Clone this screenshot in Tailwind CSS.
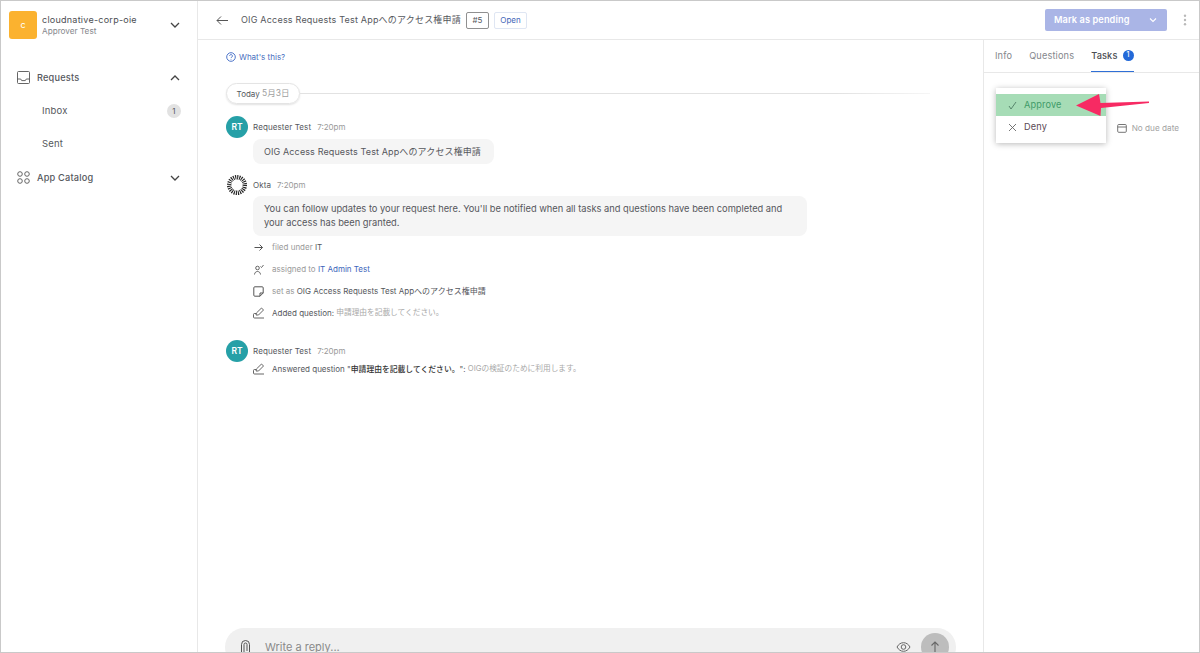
<!DOCTYPE html>
<html lang="ja">
<head>
    <meta charset="UTF-8">
    <title>Access Requests</title>
    <script src="https://cdn.jsdelivr.net/npm/@tailwindcss/browser@4"></script>
</head>
<body class="bg-white">
    <div class="relative flex h-[653px] w-[1200px] overflow-hidden border border-[#c9c9c9] bg-white font-['Inter','Noto_Sans_CJK_JP',sans-serif] text-[#55575c] antialiased">

        <!-- Sidebar -->
        <aside class="flex w-[197px] shrink-0 flex-col border-r border-[#e8e8e8] pl-[8px] pr-[16px]">
            <div class="mt-[10px] flex items-center">
                <div class="flex h-[28px] w-[28px] items-center justify-center rounded-[3px] bg-[#fbb22f] text-[9px] text-white">c</div>
                <div class="ml-[5px] flex-1 leading-none">
                    <div class="text-[9px] tracking-[0.25px] text-[#4b4d52]">cloudnative-corp-oie</div>
                    <div class="mt-[3px] text-[8.2px] text-[#85878c]">Approver Test</div>
                </div>
                <svg class="mr-[1px] h-[10px] w-[10px]" viewBox="0 0 10 10" fill="none" stroke="#444" stroke-width="1.3"><path d="M1 3l4 4 4-4"/></svg>
            </div>

            <div class="mt-[22px] flex h-[33px] items-center pl-[8px]">
                <svg class="h-[13px] w-[13px]" viewBox="0 0 13 13" fill="none" stroke="#555" stroke-width="0.9"><rect x="0.5" y="0.5" width="12" height="12" rx="1"/><path d="M0.5 8h3.2l1 1.6h3.6l1-1.6h3.2"/></svg>
                <span class="ml-[7px] flex-1 text-[9.2px] font-medium tracking-[0.2px]">Requests</span>
                <svg class="mr-[1px] h-[10px] w-[10px]" viewBox="0 0 10 10" fill="none" stroke="#444" stroke-width="1.3"><path d="M1 7l4-4 4 4"/></svg>
            </div>
            <div class="flex h-[34px] items-center pl-[33px]">
                <span class="flex-1 text-[9.5px] tracking-[0.2px]">Inbox</span>
                <span class="flex h-[14px] w-[14px] items-center justify-center rounded-full bg-[#e2e2e2] text-[8px]">1</span>
            </div>
            <div class="flex h-[33px] items-center pl-[33px] text-[9.5px] tracking-[0.2px]">Sent</div>
            <div class="flex h-[33px] items-center pl-[8px]">
                <svg class="h-[13px] w-[13px]" viewBox="0 0 13 13" fill="none" stroke="#555" stroke-width="0.9"><circle cx="3" cy="3" r="2.3"/><circle cx="10" cy="3" r="2.3"/><circle cx="3" cy="10" r="2.3"/><circle cx="10" cy="10" r="2.3"/></svg>
                <span class="ml-[7px] flex-1 text-[9.2px] font-medium tracking-[0.2px]">App Catalog</span>
                <svg class="mr-[1px] h-[10px] w-[10px]" viewBox="0 0 10 10" fill="none" stroke="#444" stroke-width="1.3"><path d="M1 3l4 4 4-4"/></svg>
            </div>
        </aside>

        <div class="flex min-w-0 flex-1 flex-col">
            <!-- Header -->
            <header class="flex h-[39px] shrink-0 items-center border-b border-[#e8e8e8] pl-[18px] pr-[10px]">
                <svg class="h-[11px] w-[13px]" viewBox="0 0 13 11" fill="none" stroke="#555" stroke-width="1"><path d="M12 5.5H1M5 1.5l-4 4 4 4"/></svg>
                <span class="ml-[12px] text-[9px] tracking-[0.2px]">OIG Access Requests Test Appへのアクセス権申請</span>
                <span class="ml-[5px] flex h-[17px] w-[23px] items-center justify-center rounded-[2px] border border-[#909090] text-[8px]">#5</span>
                <span class="ml-[5px] flex h-[17px] w-[33px] items-center justify-center rounded-[2px] border border-[#dfe6f3] text-[8px] text-[#3f66b8]">Open</span>
                <div class="ml-auto flex h-[22px] w-[122px] items-center rounded-[2px] bg-[#aab5e6] pl-[9px] pr-[10px] text-white">
                    <span class="flex-1 text-[9.2px] font-semibold tracking-[0.1px]">Mark as pending</span>
                    <svg class="h-[8px] w-[8px]" viewBox="0 0 8 8" fill="none" stroke="#fff" stroke-width="1.1"><path d="M1 2.5l3 3 3-3"/></svg>
                </div>
                <svg class="ml-[16px] mr-[2px] h-[12px] w-[4px]" viewBox="0 0 4 12" fill="#b9b9b9"><circle cx="2" cy="1.7" r="1.2"/><circle cx="2" cy="6" r="1.2"/><circle cx="2" cy="10.3" r="1.2"/></svg>
            </header>

            <div class="flex min-h-0 flex-1">
                <!-- Conversation -->
                <main class="relative min-w-0 flex-1 pl-[28px] pr-[26px]">
                    <div class="mt-[11px] flex items-center text-[8px] text-[#4a6fc0]">
                        <svg class="mr-[3px] h-[10px] w-[10px]" viewBox="0 0 10 10" fill="none" stroke="#3b66c4" stroke-width="0.9"><circle cx="5" cy="5" r="4.3"/><path d="M3.6 3.9a1.4 1.4 0 1 1 2.2 1.2c-.5.3-.8.5-.8 1"/><path d="M5 7.1v.6"/></svg>
                        What's this?
                    </div>

                    <div class="mt-[20px] flex items-center">
                        <span class="flex h-[21px] w-[74px] items-center justify-center rounded-full border border-[#e4e4e4] text-[8px] shadow-[0_1px_2px_rgba(0,0,0,0.12)]">Today&nbsp;<span class="text-[8.5px] text-[#a0a0a0]">5月3日</span></span>
                        <span class="h-px w-[630px] bg-[linear-gradient(to_right,#e2e2e2,#e2e2e2_85%,#f6f6f6)]"></span>
                    </div>

                    <div class="mt-[12px] flex items-center">
                        <span class="flex h-[22px] w-[22px] items-center justify-center rounded-full bg-[#26a0a7] text-[8.5px] font-semibold text-white">RT</span>
                        <span class="ml-[5px] text-[8px] tracking-[0.1px]">Requester Test</span>
                        <span class="ml-[6px] text-[8px] text-[#9a9a9a]">7:20pm</span>
                    </div>
                    <div class="ml-[27px] mt-[1px] flex h-[25px] w-[241px] items-center rounded-[8px] bg-[#f5f5f5] pl-[11px] text-[9px] tracking-[0.12px]">OIG Access Requests Test Appへのアクセス権申請</div>

                    <div class="mt-[10px] flex items-center">
                        <svg class="h-[22px] w-[22px]" viewBox="0 0 22 22" fill="none" stroke="#222"><circle cx="11" cy="11" r="7.8" stroke-width="4.4" stroke-dasharray="1.1 0.94"/></svg>
                        <span class="ml-[5px] text-[8px] tracking-[0.1px]">Okta</span>
                        <span class="ml-[6px] text-[8px] text-[#9a9a9a]">7:20pm</span>
                    </div>
                    <div class="ml-[27px] w-[554px] rounded-[8px] bg-[#f5f5f5] py-[6px] pl-[11px] pr-[8px] text-[9.3px] leading-[14px]">You can follow updates to your request here. You'll be notified when all tasks and questions have been completed and your access has been granted.</div>

                    <div class="ml-[27px] text-[8px] text-[#9a9a9a]">
                        <div class="flex h-[22px] items-center">
                            <svg class="mr-[8px] h-[11px] w-[11px]" viewBox="0 0 11 11" fill="none" stroke="#555" stroke-width="1"><path d="M1.5 5.5h8M6.5 2.5l3 3-3 3"/></svg>
                            filed under&nbsp;<span class="text-[#55575c]">IT</span>
                        </div>
                        <div class="flex h-[22px] items-center">
                            <svg class="mr-[8px] h-[11px] w-[11px]" viewBox="0 0 11 11" fill="none" stroke="#555" stroke-width="0.9"><circle cx="4.5" cy="4" r="1.8"/><path d="M1.5 10.500c.2-2 1.400-3 3-3s2.800 1 3 3M7.500 2.500l1 1 2-2.500"/></svg>
                            assigned to&nbsp;<span class="text-[#3d66bb]">IT Admin Test</span>
                        </div>
                        <div class="flex h-[22px] items-center">
                            <svg class="mr-[8px] h-[11px] w-[11px]" viewBox="0 0 11 11" fill="none" stroke="#555" stroke-width="1"><path d="M7 10.200H1.800a1 1 0 0 1-1-1V1.800a1 1 0 0 1 1-1h7.400a1 1 0 0 1 1 1V7zM7 10.200V7h3.200"/></svg>
                            set as&nbsp;<span class="text-[#55575c]">OIG Access Requests Test Appへのアクセス権申請</span>
                        </div>
                        <div class="flex h-[22px] items-center">
                            <svg class="mr-[7px] h-[12px] w-[12px]" viewBox="0 0 12 12" fill="none" stroke="#555" stroke-width="0.9"><path d="M3 8l.4-2L8.500 1l2 2-5 5zM3 6.500H1.500a1 1 0 0 0-1 1V10a1 1 0 0 0 1 1h9.500"/></svg>
                            <span class="text-[#55575c]">Added question:</span>&nbsp;<span class="text-[7.7px] text-[#a8a8a8]">申請理由を記載してください。</span>
                        </div>
                    </div>

                    <div class="mt-[16px] flex items-center">
                        <span class="flex h-[22px] w-[22px] items-center justify-center rounded-full bg-[#26a0a7] text-[8.5px] font-semibold text-white">RT</span>
                        <span class="ml-[5px] text-[8px] tracking-[0.1px]">Requester Test</span>
                        <span class="ml-[6px] text-[8px] text-[#9a9a9a]">7:20pm</span>
                    </div>
                    <div class="ml-[27px] flex h-[14px] items-center text-[8px] text-[#a8a8a8]">
                        <svg class="mr-[7px] h-[12px] w-[12px]" viewBox="0 0 12 12" fill="none" stroke="#555" stroke-width="0.9"><path d="M3 8l.4-2L8.500 1l2 2-5 5zM3 6.500H1.500a1 1 0 0 0-1 1V10a1 1 0 0 0 1 1h9.500"/></svg>
                        <span class="text-[#55575c]">Answered question "<span class="text-[7.8px] font-medium text-[#333]">申請理由を記載してください。</span>":</span>&nbsp;<span class="text-[7.7px]">OIGの検証のために利用します。</span>
                    </div>

                    <!-- Reply box, cut off by the window edge -->
                    <div class="absolute bottom-[-14px] left-[27px] flex h-[38px] w-[731px] items-center rounded-[19px] bg-[#f0f0f0] pl-[15px] pr-[7px]">
                        <svg class="h-[15px] w-[12px]" viewBox="0 0 12 15" fill="none" stroke="#555" stroke-width="1"><path d="M1.500 14V4.500a4 4 0 0 1 8 0V14M4 13V4.500a1.500 1.500 0 0 1 3 0V11"/></svg>
                        <span class="ml-[13px] flex-1 text-[11px] text-[#8a8a8a]">Write a reply...</span>
                        <svg class="h-[12px] w-[15px]" viewBox="0 0 15 12" fill="none" stroke="#666" stroke-width="1"><path d="M1 6c1.600-2.800 3.800-4.300 6.500-4.300S12.400 3.200 14 6c-1.600 2.800-3.800 4.300-6.500 4.300S2.600 8.800 1 6z"/><circle cx="7.500" cy="6" r="2.300"/></svg>
                        <span class="ml-[10px] flex h-[28px] w-[28px] items-center justify-center rounded-full bg-[#bdbdbd]">
                            <svg class="h-[12px] w-[10px]" viewBox="0 0 10 12" fill="none" stroke="#666" stroke-width="1.100"><path d="M5 11.500V1M1.500 4.500L5 1l3.500 3.500"/></svg>
                        </span>
                    </div>
                </main>

                <!-- Right panel -->
                <section class="w-[216px] shrink-0 border-l border-[#e8e8e8]">
                    <nav class="flex h-[33px] items-stretch border-b border-[#e8e8e8] pl-[11px] text-[9.2px] tracking-[0.15px]">
                        <span class="flex items-center text-[#85878c]">Info</span>
                        <span class="ml-[17px] flex items-center text-[#85878c]">Questions</span>
                        <span class="relative ml-[17px] flex items-center border-b border-[#2f6fd6] font-medium text-[#4b4d52]">Tasks
                            <span class="ml-[5px] flex h-[11px] w-[11px] items-center justify-center rounded-full bg-[#2369d8] text-[7px] text-white">1</span>
                        </span>
                    </nav>
                    <div class="mt-[49px] flex items-center justify-end pr-[20px] text-[8.2px] text-[#a3a3a3]">
                        <svg class="mr-[5px] h-[10px] w-[10px]" viewBox="0 0 10 10" fill="none" stroke="#666" stroke-width="0.9"><rect x="0.700" y="1.500" width="8.600" height="7.800" rx="1"/><path d="M0.700 4h8.600"/></svg>
                        No due date
                    </div>
                </section>
            </div>
        </div>

        <!-- Task dropdown -->
        <div class="absolute left-[995px] top-[87px] w-[110px] bg-white pt-[6px] shadow-[0_1px_6px_rgba(0,0,0,0.28)]">
            <div class="flex h-[22px] items-center bg-[#a6dcb6] pl-[12px] text-[9.2px] tracking-[0.15px] text-[#3f9b68]">
                <svg class="mr-[7px] h-[9px] w-[9px]" viewBox="0 0 9 9" fill="none" stroke="#4f7d64" stroke-width="0.9"><path d="M1 5l2 3 5-7"/></svg>
                Approve
            </div>
            <div class="flex h-[22px] items-center pl-[12px] text-[9.2px] tracking-[0.15px] text-[#5c4a55]">
                <svg class="mr-[7px] h-[9px] w-[9px]" viewBox="0 0 9 9" fill="none" stroke="#666" stroke-width="0.9"><path d="M1 1l7 7M8 1L1 8"/></svg>
                Deny
            </div>
            <div class="h-[5px]"></div>
        </div>

        <!-- Annotation arrow -->
        <svg class="absolute left-[1071px] top-[90px] h-[30px] w-[80px]" viewBox="0 0 80 30" fill="#f72a63"><path d="M4 14.500L27 3l1.500 9L77 10.500v1.500L29 17l-.500 8z"/></svg>
    </div>
</body>
</html>
